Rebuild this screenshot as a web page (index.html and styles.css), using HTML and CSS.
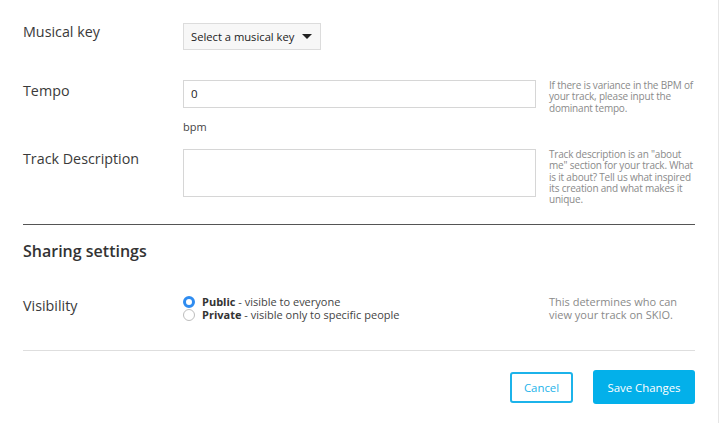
FILE: index.html
```html
<!DOCTYPE html>
<html>
<head>
<meta charset="utf-8">
<link rel="stylesheet" href="styles.css">
</head>
<body>
<div class="page">
  <div class="form">
    <div class="row row-key">
      <div class="label">Musical key</div>
      <div class="field">
        <div class="select">Select a musical key <span class="caret"></span></div>
      </div>
      <div class="help"></div>
    </div>
    <div class="row row-tempo">
      <div class="label">Tempo</div>
      <div class="field">
        <div class="input">0</div>
        <div class="unit">bpm</div>
      </div>
      <div class="help">If there is variance in the BPM of your track, please input the dominant tempo.</div>
    </div>
    <div class="row row-desc">
      <div class="label">Track Description</div>
      <div class="field">
        <div class="textarea"></div>
      </div>
      <div class="help">Track description is an "about me" section for your track. What is it about? Tell us what inspired its creation and what makes it unique.</div>
    </div>
    <hr class="rule-dark">
    <h2 class="section-title">Sharing settings</h2>
    <div class="row row-vis">
      <div class="label">Visibility</div>
      <div class="field radios">
        <div class="radio-line"><span class="radio checked"></span><b>Public</b>&nbsp;- visible to everyone</div>
        <div class="radio-line"><span class="radio"></span><b>Private</b>&nbsp;- visible only to specific people</div>
      </div>
      <div class="help help-vis">This determines who can view your track on SKIO.</div>
    </div>
    <hr class="rule-light">
    <div class="actions">
      <button class="btn btn-cancel">Cancel</button>
      <button class="btn btn-save">Save Changes</button>
    </div>
  </div>
</div>
</body>
</html>
```

FILE: styles.css
```css
* { box-sizing: border-box; }
html, body { margin: 0; padding: 0; background: #fff; }
body { font-family: "Open Sans", "Liberation Sans", sans-serif; color: #333; }
.page {
  width: 719px;
  height: 423px;
  border-right: 1px solid #e6e6e6;
  overflow: hidden;
}
.form {
  width: 695px;
  padding: 23px 0 0 23px;
}
.row {
  display: grid;
  grid-template-columns: 147px 353px 146px;
  column-gap: 13px;
}
.label {
  font-size: 14.3px;
  color: #3a3a3a;
  line-height: 20px;
}
.row-key { height: 57px; }
.row-key .label { margin-top: -1px; }
.select {
  display: inline-flex;
  align-items: center;
  height: 27px;
  padding: 0 8px 0 7px;
  border: 1px solid #dcdcdc;
  background: #f7f7f7;
  font-size: 11.2px;
  color: #222;
}
.caret {
  display: inline-block;
  width: 0; height: 0;
  margin-left: 8px;
  border-left: 5px solid transparent;
  border-right: 5px solid transparent;
  border-top: 5px solid #222;
}
.row-tempo { height: 69px; }
.row-tempo .label { margin-top: 1px; }
.input {
  height: 28px;
  border: 1px solid #d6d6d6;
  font-size: 11.5px;
  padding: 5px 7px;
  color: #222;
}
.unit {
  font-size: 11px;
  margin-top: 11px;
  color: #444;
}
.help {
  font-size: 10px;
  letter-spacing: -0.2px;
  line-height: 11.3px;
  color: #8a8a8a;
}
.textarea {
  height: 48px;
  border: 1px solid #d6d6d6;
}
.row-desc .label { margin-top: 0; }
.rule-dark {
  border: 0;
  border-top: 1px solid #555;
  margin: 19px 0 0 0;
  width: 672px;
}
.section-title {
  font-size: 16px;
  font-weight: 600;
  color: #333;
  margin: 15px 0 0 0;
  line-height: 22px;
}
.row-vis { margin-top: 33px; }
.row-vis .label { margin-top: 1px; }
.radios { font-size: 11px; color: #444; margin-top: 0; }
.radio-line { display: flex; align-items: center; height: 13px; line-height: 13px; }
.radio-line b { color: #333; font-weight: 700; }
.radio {
  display: inline-block;
  flex: none;
  width: 12px; height: 12px;
  border-radius: 50%;
  border: 1px solid #bdbdbd;
  margin-right: 7px;
  background: #fff;
}
.radio.checked {
  border: 3.5px solid #2f8cf0;
  background: #fff;
}
.help-vis {
  font-size: 11px;
  letter-spacing: 0;
  line-height: 13px;
  color: #8a8a8a;
  margin-top: 0;
}
.rule-light {
  border: 0;
  border-top: 1px solid #dedede;
  margin: 29px 0 0 0;
  width: 672px;
}
.actions {
  display: flex;
  justify-content: flex-end;
  align-items: center;
  gap: 20px;
  width: 672px;
  margin-top: 19px;
}
.btn {
  font-family: "Open Sans", "Liberation Sans", sans-serif;
  font-size: 11.4px;
  border-radius: 3px;
  cursor: pointer;
}
.btn-cancel {
  width: 63px; height: 31px;
  background: #fff;
  border: 2px solid #1cb3ea;
  color: #1cb3ea;
}
.btn-save {
  width: 102px; height: 34px;
  background: #03b0ea;
  border: 0;
  color: #fff;
}
```
